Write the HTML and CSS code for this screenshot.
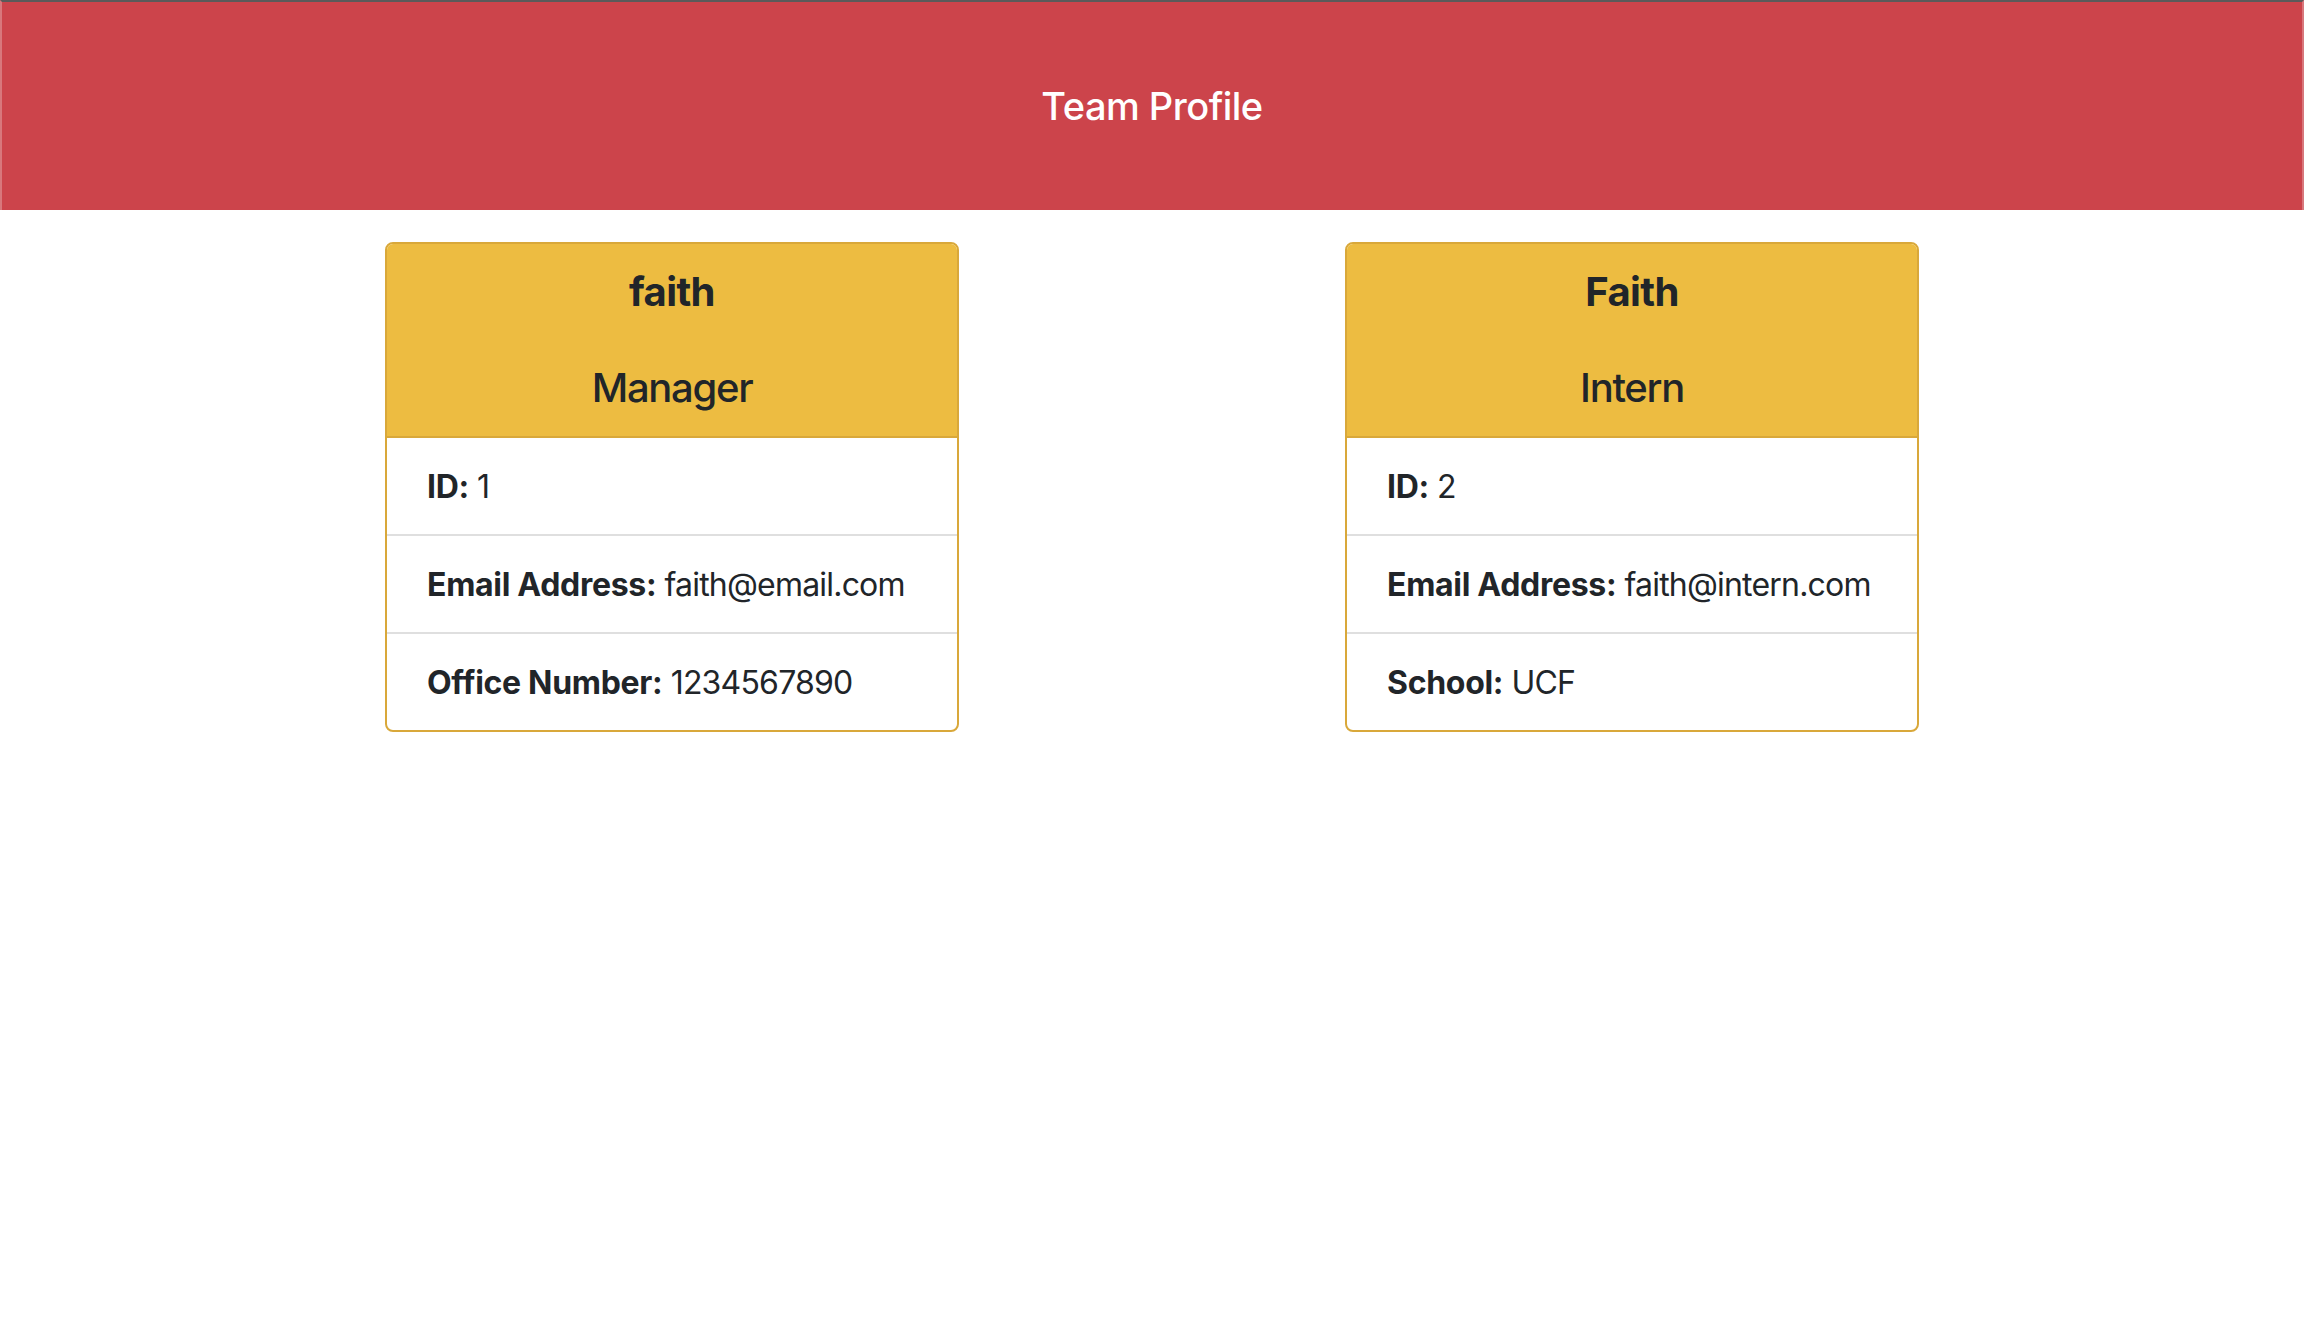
FILE: index.html
```html
<!DOCTYPE html>
<html lang="en">
<head>
<meta charset="utf-8">
<title>Team Profile</title>
<link rel="stylesheet" href="styles.css">
</head>
<body>
<header class="banner">
  <h1 class="banner-title">Team Profile</h1>
</header>
<main class="team">
  <div class="team-col">
    <section class="card">
      <div class="card-header">
        <h2 class="card-name">faith</h2>
        <h3 class="card-role">Manager</h3>
      </div>
      <ul class="card-list">
        <li class="card-item"><strong>ID:</strong> 1</li>
        <li class="card-item"><strong>Email Address:</strong> faith@email.com</li>
        <li class="card-item"><strong>Office Number:</strong> 1234567890</li>
      </ul>
    </section>
  </div>
  <div class="team-col">
    <section class="card">
      <div class="card-header">
        <h2 class="card-name">Faith</h2>
        <h3 class="card-role">Intern</h3>
      </div>
      <ul class="card-list">
        <li class="card-item"><strong>ID:</strong> 2</li>
        <li class="card-item"><strong>Email Address:</strong> faith@intern.com</li>
        <li class="card-item"><strong>School:</strong> UCF</li>
      </ul>
    </section>
  </div>
</main>
</body>
</html>
```
FILE: styles.css
```css
* { box-sizing: border-box; }

html, body {
  margin: 0;
  padding: 0;
  background: #ffffff;
  color: #212529;
  font-family: Inter, "Noto Sans", "Liberation Sans", sans-serif;
}

.banner {
  height: 210px;
  background: #cc444b;
  border-top: 2px solid #5a5a5a;
  border-left: 2px solid #d8777c;
  border-right: 2px solid #d8777c;
  display: flex;
  align-items: center;
  justify-content: center;
}

.banner-title {
  margin: 0;
  color: #ffffff;
  font-size: 38px;
  font-weight: 500;
  line-height: 48px;
  letter-spacing: -0.5px;
}

.team {
  width: 1920px;
  margin: 32px auto 0;
  display: grid;
  grid-template-columns: 960px 960px;
}

.team-col {
  padding-left: 193px;
}

.card {
  width: 574px;
  border: 2px solid #d9a83a;
  border-radius: 8px;
  overflow: hidden;
  background: #ffffff;
}

.card-header {
  background: #edbc41;
  border-bottom: 2px solid #d9a83a;
  padding: 24px 40px;
  text-align: center;
}

.card-name,
.card-role {
  margin: 0;
  font-size: 40px;
  line-height: 48px;
}

.card-name {
  font-weight: 700;
  letter-spacing: -0.6px;
  margin-bottom: 48px;
}

.card-role {
  font-weight: 500;
  letter-spacing: -1.3px;
}

.card-list {
  list-style: none;
  margin: 0;
  padding: 0;
}

.card-item {
  padding: 25px 40px 23px;
  font-size: 32px;
  line-height: 48px;
  letter-spacing: -0.8px;
  white-space: nowrap;
  border-top: 2px solid #dfdfdf;
}

.card-item:first-child {
  border-top: none;
}

.card-item strong {
  font-weight: 700;
  letter-spacing: -0.3px;
}
```
